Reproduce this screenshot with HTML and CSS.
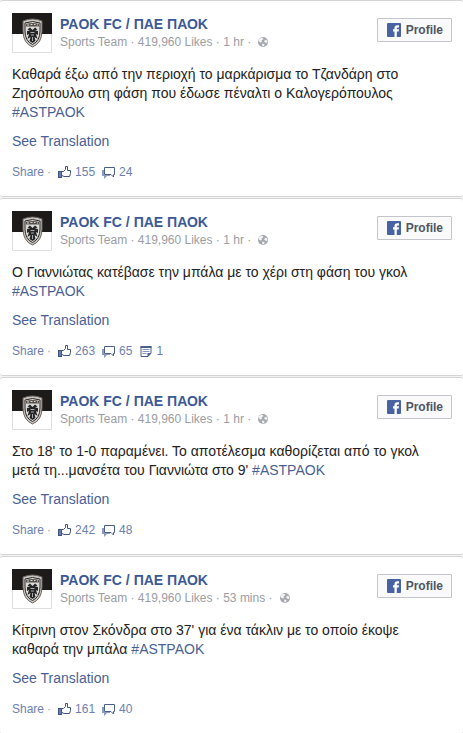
FILE: index.html
```html
<!DOCTYPE html>
<html lang="el">
<head>
    <meta charset="UTF-8">
    <meta name="viewport" content="width=device-width, initial-scale=1.0">
    <title>PAOK FC / ΠΑΕ ΠΑΟΚ</title>
    <link rel="stylesheet" href="styles.css">
</head>
<body>
    <svg class="sprite" aria-hidden="true">
        <symbol id="crest" viewBox="0 0 40 40">
            <rect width="40" height="40" fill="#fff"/>
            <rect width="40" height="21" fill="#1c1b1a"/>
            <path d="M.5 21V39.500H39.500V21" fill="none" stroke="#dedede"/>
            <path d="M11 8Q20.500 4 30 8Q30 12 30 18Q30 30 20.500 34Q11 30 11 18Z" fill="#c9c4bd" stroke="#6d655f"/>
            <path d="M13 10Q20.500 7 28 10V18Q28 28 20.500 31.500Q13 28 13 18Z" fill="#dcdcda" stroke="#282828"/>
            <path d="M14 11Q20.500 9 27 11V13.500H14Z" fill="#55504c"/>
            <path d="M15 12h2M18.500 11.500h2M22 11.500h1.500M25 12h1" stroke="#d8d5d0"/>
            <path d="M20.500 17L18 14.500L15.500 16.500L18 17.500L15 18V22L17 21L15.500 26L18.500 24L17.500 28L20.500 30L23.500 28L22.500 24L25.500 26L24 21L26 22V18L23 17.500L25.500 16.500L23 14.500Z" fill="#252525"/>
            <path d="M18.500 19.500h4M19 22h3M20.500 24v4" stroke="#a9adb4"/>
        </symbol>
        <symbol id="globe" viewBox="0 0 12 12">
            <circle cx="6" cy="6" r="5" fill="#a5a8ae"/>
            <path d="M2 3L5 1.500L6.500 3L4.500 4.500L5 6L3.500 6.500L1.500 5Z M7 5L9 3.500L10.500 5L10 7L8 6.500Z M5 7.500L7.500 8L7 10L5.500 10.500Z" fill="#f4f4f4"/>
        </symbol>
        <symbol id="facebook" viewBox="0 0 14 14">
            <rect width="14" height="14" rx="1" fill="#4862a3"/>
            <path d="M7.500 14V8.500H6V6.300H7.500V5Q7.500 2.200 10.300 2.200H12V4.400H10.800Q9.800 4.400 9.800 5.300V6.300H12L11.700 8.500H9.800V14Z" fill="#fff"/>
        </symbol>
        <symbol id="like" viewBox="0 0 14 13">
            <rect x="0" y="5" width="4" height="7" fill="#3e5583"/>
            <rect x="1" y="6" width="2" height="5" fill="#6b7da8"/>
            <path d="M4 5.500H5.500L7.500 3.500V.5H9.500V4.500H12.500V7.500L11.500 10.500H6L4 9.500" fill="#fff" stroke="#3e5583"/>
        </symbol>
        <symbol id="comment" viewBox="0 0 14 13">
            <path d="M0 4H2V9H8V10H5L2 13V10H0Z" fill="#8d9bc0"/>
            <path d="M2.500 1.500H12.500V8.500H11.500V11L9 8.500H2.500Z" fill="#fff" stroke="#4b5f8d"/>
        </symbol>
        <symbol id="note" viewBox="0 0 13 13">
            <path d="M1.500 1.500H11.500V8L8.500 11.500H1.500Z" fill="#fff" stroke="#4b5f8d"/>
            <path d="M1 2H12" stroke="#4b5f8d" stroke-width="2"/>
            <path d="M3 4.500H10M3 6.500H10M3 8.500H7" stroke="#8796b9"/>
            <path d="M8 12V8H12Z" fill="#4b5f8d"/>
        </symbol>
    </svg>

    <main class="feed">
        <article class="post">
            <header class="post-header">
                <svg class="avatar" role="img" aria-label="PAOK FC"><use href="#crest"/></svg>
                <div class="page-info">
                    <a class="page-name" href="#">PAOK FC / ΠΑΕ ΠΑΟΚ</a>
                    <div class="page-meta">Sports Team · 419,960 Likes · 1 hr · <svg class="globe"><use href="#globe"/></svg></div>
                </div>
                <button class="profile-btn" type="button"><svg class="fb-icon"><use href="#facebook"/></svg>Profile</button>
            </header>
            <p class="message">Καθαρά έξω από την περιοχή το μαρκάρισμα το Τζανδάρη στο Ζησόπουλο στη φάση που έδωσε πέναλτι ο Καλογερόπουλος <a href="#">#ASTPAOK</a></p>
            <a class="translate" href="#">See Translation</a>
            <footer class="post-footer">
                <a class="share" href="#">Share</a><span class="dot">·</span>
                <a class="count" href="#" aria-label="155 likes"><svg class="icon"><use href="#like"/></svg>155</a>
                <a class="count" href="#" aria-label="24 comments"><svg class="icon"><use href="#comment"/></svg>24</a>
            </footer>
        </article>

        <article class="post">
            <header class="post-header">
                <svg class="avatar" role="img" aria-label="PAOK FC"><use href="#crest"/></svg>
                <div class="page-info">
                    <a class="page-name" href="#">PAOK FC / ΠΑΕ ΠΑΟΚ</a>
                    <div class="page-meta">Sports Team · 419,960 Likes · 1 hr · <svg class="globe"><use href="#globe"/></svg></div>
                </div>
                <button class="profile-btn" type="button"><svg class="fb-icon"><use href="#facebook"/></svg>Profile</button>
            </header>
            <p class="message">Ο Γιαννιώτας κατέβασε την μπάλα με το χέρι στη φάση του γκολ <a href="#">#ASTPAOK</a></p>
            <a class="translate" href="#">See Translation</a>
            <footer class="post-footer">
                <a class="share" href="#">Share</a><span class="dot">·</span>
                <a class="count" href="#" aria-label="263 likes"><svg class="icon"><use href="#like"/></svg>263</a>
                <a class="count" href="#" aria-label="65 comments"><svg class="icon"><use href="#comment"/></svg>65</a>
                <a class="count" href="#" aria-label="1 share"><svg class="icon"><use href="#note"/></svg>1</a>
            </footer>
        </article>

        <article class="post">
            <header class="post-header">
                <svg class="avatar" role="img" aria-label="PAOK FC"><use href="#crest"/></svg>
                <div class="page-info">
                    <a class="page-name" href="#">PAOK FC / ΠΑΕ ΠΑΟΚ</a>
                    <div class="page-meta">Sports Team · 419,960 Likes · 1 hr · <svg class="globe"><use href="#globe"/></svg></div>
                </div>
                <button class="profile-btn" type="button"><svg class="fb-icon"><use href="#facebook"/></svg>Profile</button>
            </header>
            <p class="message">Στο 18' το 1-0 παραμένει. Το αποτέλεσμα καθορίζεται από το γκολ μετά τη...μανσέτα του Γιαννιώτα στο 9' <a href="#">#ASTPAOK</a></p>
            <a class="translate" href="#">See Translation</a>
            <footer class="post-footer">
                <a class="share" href="#">Share</a><span class="dot">·</span>
                <a class="count" href="#" aria-label="242 likes"><svg class="icon"><use href="#like"/></svg>242</a>
                <a class="count" href="#" aria-label="48 comments"><svg class="icon"><use href="#comment"/></svg>48</a>
            </footer>
        </article>

        <article class="post">
            <header class="post-header">
                <svg class="avatar" role="img" aria-label="PAOK FC"><use href="#crest"/></svg>
                <div class="page-info">
                    <a class="page-name" href="#">PAOK FC / ΠΑΕ ΠΑΟΚ</a>
                    <div class="page-meta">Sports Team · 419,960 Likes · 53 mins · <svg class="globe"><use href="#globe"/></svg></div>
                </div>
                <button class="profile-btn" type="button"><svg class="fb-icon"><use href="#facebook"/></svg>Profile</button>
            </header>
            <p class="message">Κίτρινη στον Σκόνδρα στο 37' για ένα τάκλιν με το οποίο έκοψε καθαρά την μπάλα <a href="#">#ASTPAOK</a></p>
            <a class="translate" href="#">See Translation</a>
            <footer class="post-footer">
                <a class="share" href="#">Share</a><span class="dot">·</span>
                <a class="count" href="#" aria-label="161 likes"><svg class="icon"><use href="#like"/></svg>161</a>
                <a class="count" href="#" aria-label="40 comments"><svg class="icon"><use href="#comment"/></svg>40</a>
            </footer>
        </article>
    </main>
</body>
</html>
```
FILE: styles.css
```css
body {
    margin: 0;
    background: #f3f3f4;
    color: #222;
    font-family: "Liberation Sans", Arial, sans-serif;
    font-size: 14px;
    line-height: 19px;
}

a {
    color: #4a5f96;
    text-decoration: none;
}

a:hover {
    text-decoration: underline;
}

.sprite {
    display: none;
}

.feed {
    display: flex;
    flex-direction: column;
    gap: 1px;
}

.post {
    background: #fff;
    border: 1px solid #d5d5d7;
    border-width: 1px 0;
    border-radius: 3px;
    padding: 12px 11px 14px 12px;
}

.post-header {
    display: flex;
    align-items: flex-start;
    gap: 8px;
}

.avatar {
    width: 40px;
    height: 40px;
}

.page-info {
    flex: 1;
    padding-top: 1px;
}

.page-name {
    display: block;
    color: #3b5998;
    font-weight: bold;
    line-height: 20px;
}

.page-meta {
    display: flex;
    align-items: center;
    gap: 6px;
    color: #9a9da3;
    font-size: 12px;
    line-height: 16px;
}

.globe {
    width: 12px;
    height: 12px;
}

.profile-btn {
    display: flex;
    align-items: center;
    gap: 5px;
    height: 24px;
    margin-top: 5px;
    padding: 0 8px 0 9px;
    border: 1px solid #c3c5ca;
    border-radius: 1px;
    background: #fafafb;
    color: #4e5665;
    font-family: inherit;
    font-size: 12px;
    font-weight: bold;
    cursor: pointer;
}

.fb-icon {
    width: 14px;
    height: 14px;
}

.message {
    margin: 12px 0 10px;
    padding-right: 20px;
}

.translate {
    display: block;
}

.post-footer {
    display: flex;
    align-items: center;
    gap: 7px;
    margin-top: 12px;
    font-size: 12px;
}

.post-footer a {
    color: #6d7fae;
}

.dot {
    margin-left: -4px;
    color: #9aa4bf;
}

.count {
    display: flex;
    align-items: center;
    gap: 3px;
}

.icon {
    width: 14px;
    height: 13px;
}
```
